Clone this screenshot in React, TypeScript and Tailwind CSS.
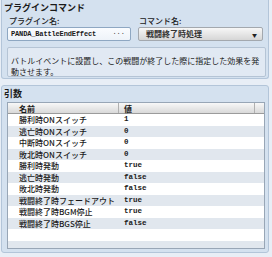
import React from 'react';

const rows: { name: string; value: string }[] = [
  { name: '勝利時ONスイッチ', value: '1' },
  { name: '逃亡時ONスイッチ', value: '0' },
  { name: '中断時ONスイッチ', value: '0' },
  { name: '敗北時ONスイッチ', value: '0' },
  { name: '勝利時発動', value: 'true' },
  { name: '逃亡時発動', value: 'false' },
  { name: '敗北時発動', value: 'false' },
  { name: '戦闘終了時フェードアウト', value: 'true' },
  { name: '戦闘終了時BGM停止', value: 'true' },
  { name: '戦闘終了時BGS停止', value: 'false' },
  { name: '', value: '' },
  { name: '', value: '' },
];

const jp = { fontFamily: '"Noto Sans CJK JP", "Noto Sans", sans-serif' };
const mono = { fontFamily: '"Liberation Mono", "DejaVu Sans Mono", monospace' };

export default function App() {
  return (
    <div
      className="w-[272px] h-[257px] overflow-hidden bg-[#e8eef6] text-[#1a1a1a]"
      style={jp}
    >
      {/* plugin command panel */}
      <section className="ml-[1px] w-[268px] h-[79px] bg-[#d4e1ef] border border-t-0 border-[#b3c5d9] rounded-b-[3px] px-[5px]">
        <div className="pt-[2px] -ml-[3px] text-[9px] leading-[12px] font-bold">プラグインコマンド</div>
        <div className="flex gap-[7px] mt-[2px]">
          <div className="w-[126px]">
            <div className="pl-[2px] text-[8px] leading-[10px] font-medium">プラグイン名:</div>
            <div className="mt-[1px] h-[14px] flex items-center justify-between bg-gradient-to-b from-[#fafcff] to-[#eef3f9] border border-[#8ea7c2] rounded-[2px] pl-[3px] pr-[5px]">
              <span className="text-[7px] tracking-[-0.15px] font-bold" style={mono}>PANDA_BattleEndEffect</span>
              <span className="text-[7px] leading-[7px] -mt-[3px] text-[#444]" style={mono}>...</span>
            </div>
          </div>
          <div className="w-[127px]">
            <div className="pl-[1px] text-[8px] leading-[10px] font-medium">コマンド名:</div>
            <div className="mt-[1px] h-[14px] flex items-center justify-between bg-gradient-to-b from-[#f7f7f7] to-[#d6d6d6] border border-[#a3a8ae] rounded-[2px] pl-[7px] pr-[5px]">
              <span className="text-[8px] font-bold text-[#333]">戦闘終了時処理</span>
              <span className="text-[5px] leading-[5px] text-[#222]">▼</span>
            </div>
          </div>
        </div>
        <div className="mt-[6px] h-[30px] w-[259px] bg-[#e1e9f3] border border-[#b5c4d5] rounded-[2px] px-[3px] pt-[7px] text-[8px] leading-[11px]">
          バトルイベントに設置し、この戦闘が終了した際に指定した効果を発動させます。
        </div>
      </section>

      {/* arguments panel */}
      <section className="mt-[6px] ml-[1px] w-[268px] h-[168px] bg-[#d4e1ef] border border-[#b3c5d9] rounded-[3px] px-[5px]">
        <div className="pt-[2px] -ml-[3px] text-[9px] leading-[12px] font-bold">引数</div>
        <div className="mt-[2px] w-[258px] h-[147px] bg-white border border-[#98a6b6] overflow-hidden">
          <div className="flex h-[11px] bg-gradient-to-b from-[#f8f8f8] to-[#d9d9d9] border-b border-[#9b9b9b] text-[8px] leading-[11px] font-bold">
            <div className="w-[111px] pl-[11px] border-r border-[#b0b0b0]">名前</div>
            <div className="w-[136px] pl-[5px] border-r border-[#b0b0b0]">値</div>
            <div className="flex-1" />
          </div>
          {rows.map((r, i) => (
            <div
              key={i}
              className={`flex h-[11.5px] items-center text-[8px] leading-[11.5px] ${i % 2 === 0 ? 'bg-white' : 'bg-[#e1e7ee]'}`}
            >
              <div className="w-[111px] pl-[11px] font-medium whitespace-nowrap">{r.name}</div>
              <div className="pl-[5px] text-[7.5px] font-bold" style={mono}>{r.value}</div>
            </div>
          ))}
        </div>
      </section>
    </div>
  );
}
